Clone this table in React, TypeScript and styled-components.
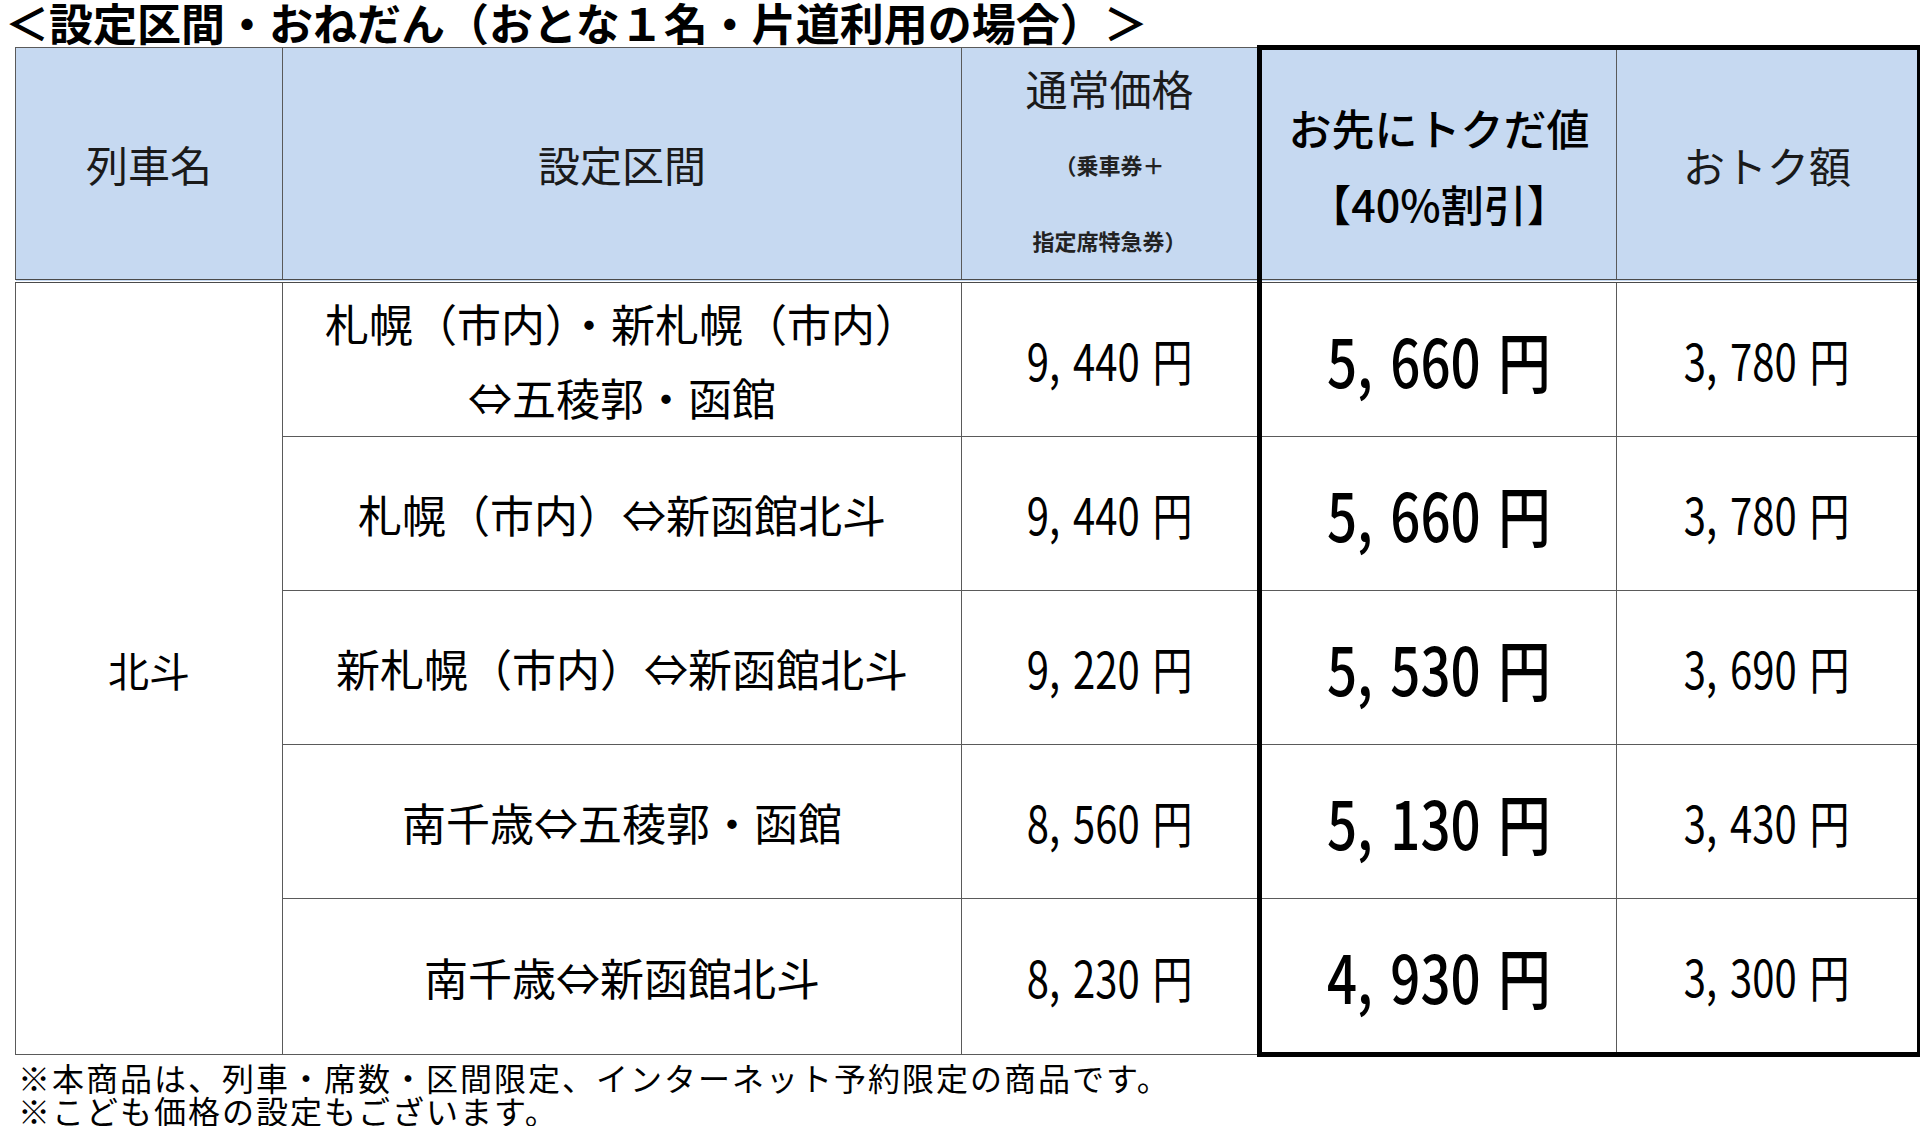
import styled, { createGlobalStyle } from 'styled-components';

const GlobalStyle = createGlobalStyle`
  html, body {
    margin: 0;
    padding: 0;
    background: #ffffff;
  }
  body {
    font-family: "Noto Sans CJK JP", "Noto Sans", sans-serif;
    color: #111111;
  }
`;

type Fare = {
    route: string[];
    normal: string;
    deal: string;
    saving: string;
};

const fares: Fare[] = [
    {route: ['札幌（市内）・新札幌（市内）', '⇔五稜郭・函館'], normal: '9, 440 円', deal: '5, 660 円', saving: '3, 780 円'},
    {route: ['札幌（市内）⇔新函館北斗'], normal: '9, 440 円', deal: '5, 660 円', saving: '3, 780 円'},
    {route: ['新札幌（市内）⇔新函館北斗'], normal: '9, 220 円', deal: '5, 530 円', saving: '3, 690 円'},
    {route: ['南千歳⇔五稜郭・函館'], normal: '8, 560 円', deal: '5, 130 円', saving: '3, 430 円'},
    {route: ['南千歳⇔新函館北斗'], normal: '8, 230 円', deal: '4, 930 円', saving: '3, 300 円'},
];

const THIN = '1px solid #5a5a5a';
const THICK = '5px solid #000000';

export default function App() {
    return (
        <Page>
            <GlobalStyle/>
            <Title>＜設定区間・おねだん（おとな１名・片道利用の場合）＞</Title>
            <Sheet>
                <colgroup>
                    <col style={{width: 267}}/>
                    <col style={{width: 679}}/>
                    <col style={{width: 298}}/>
                    <col style={{width: 357}}/>
                    <col style={{width: 303}}/>
                </colgroup>
                <thead>
                <tr>
                    <HeadCell>列車名</HeadCell>
                    <HeadCell>設定区間</HeadCell>
                    <HeadCell>
                        <Stacked>
                            <span>通常価格</span>
                            <SmallNote>（乗車券＋</SmallNote>
                            <SmallNote>指定席特急券）</SmallNote>
                        </Stacked>
                    </HeadCell>
                    <HeadCell $edge="left">
                        <DealHead>
                            お先にトクだ値<br/>
                            <span>【40%割引】</span>
                        </DealHead>
                    </HeadCell>
                    <HeadCell $edge="right">おトク額</HeadCell>
                </tr>
                </thead>
                <tbody>
                {fares.map((fare, i) => {
                    const last = i === fares.length - 1;
                    return (
                        <tr key={i}>
                            {i === 0 && <TrainCell rowSpan={fares.length}>北斗</TrainCell>}
                            <RouteCell>
                                {fare.route.map((line, j) => (
                                    <div key={j}>{line}</div>
                                ))}
                            </RouteCell>
                            <PriceCell>
                                <Figure $size={50} $gap={5}>{fare.normal}</Figure>
                            </PriceCell>
                            <PriceCell $edge="left" $last={last}>
                                <Figure $size={66} $gap={7} $strong>{fare.deal}</Figure>
                            </PriceCell>
                            <PriceCell $edge="right" $last={last}>
                                <Figure $size={50} $gap={5}>{fare.saving}</Figure>
                            </PriceCell>
                        </tr>
                    );
                })}
                </tbody>
            </Sheet>
            <Notes>
                <p>※本商品は、列車・席数・区間限定、インターネット予約限定の商品です。</p>
                <p>※こども価格の設定もございます。</p>
            </Notes>
        </Page>
    );
}

const Page = styled.div`
  width: 1920px;
  padding-left: 15px;
  box-sizing: border-box;
`;

const Title = styled.h1`
  margin: 0 0 0 -10px;
  font-size: 44px;
  line-height: 45px;
  font-weight: 700;
  color: #000;
  white-space: nowrap;
`;

const Sheet = styled.table`
  width: 1904px;
  border-collapse: collapse;
  table-layout: fixed;
`;

type Edge = { $edge?: 'left' | 'right'; $last?: boolean };

const HeadCell = styled.th<Edge>`
  height: 229px;
  padding: 0;
  background: #c6d9f1;
  font-size: 42px;
  font-weight: 400;
  color: #1a1a1a;
  text-align: center;
  vertical-align: middle;
  border: ${THIN};
  border-bottom: 4px double #4a4a4a;
  ${({$edge}) => $edge && `border-top: ${THICK};`}
  ${({$edge}) => $edge === 'left' && `border-left: ${THICK};`}
  ${({$edge}) => $edge === 'right' && `border-right: ${THICK};`}
`;

const Stacked = styled.div`
  height: 229px;
  display: grid;
  grid-template-rows: repeat(3, 76px);
  align-content: center;
  align-items: center;
  justify-items: center;
  line-height: 52px;
`;

const SmallNote = styled.span`
  font-size: 22px;
  line-height: 30px;
  font-weight: 700;
  color: #222;
`;

const DealHead = styled.div`
  font-size: 43px;
  line-height: 76px;
  font-weight: 500;
  color: #000;
`;

const BodyCell = styled.td`
  height: 153px;
  padding: 0;
  border: ${THIN};
  text-align: center;
  vertical-align: middle;
  color: #000;
`;

const TrainCell = styled(BodyCell)`
  font-size: 41px;
`;

const RouteCell = styled(BodyCell)`
  font-size: 44px;
  line-height: 74px;
`;

const PriceCell = styled(BodyCell)<Edge>`
  ${({$edge}) => $edge === 'left' && `border-left: ${THICK};`}
  ${({$edge}) => $edge === 'right' && `border-right: ${THICK};`}
  ${({$last}) => $last && `border-bottom: ${THICK};`}
`;

const Figure = styled.span<{ $size: number; $gap: number; $strong?: boolean }>`
  display: inline-block;
  font-size: ${({$size}) => $size}px;
  word-spacing: ${({$gap}) => $gap}px;
  font-weight: ${({$strong}) => ($strong ? 500 : 400)};
  line-height: 1;
  white-space: nowrap;
  transform: scaleX(0.8);
`;

const Notes = styled.div`
  margin-top: 4px;
  padding-left: 3px;
  font-size: 32px;
  letter-spacing: 2px;
  line-height: 33px;
  color: #000;

  p {
    margin: 0;
    white-space: nowrap;
  }
`;
